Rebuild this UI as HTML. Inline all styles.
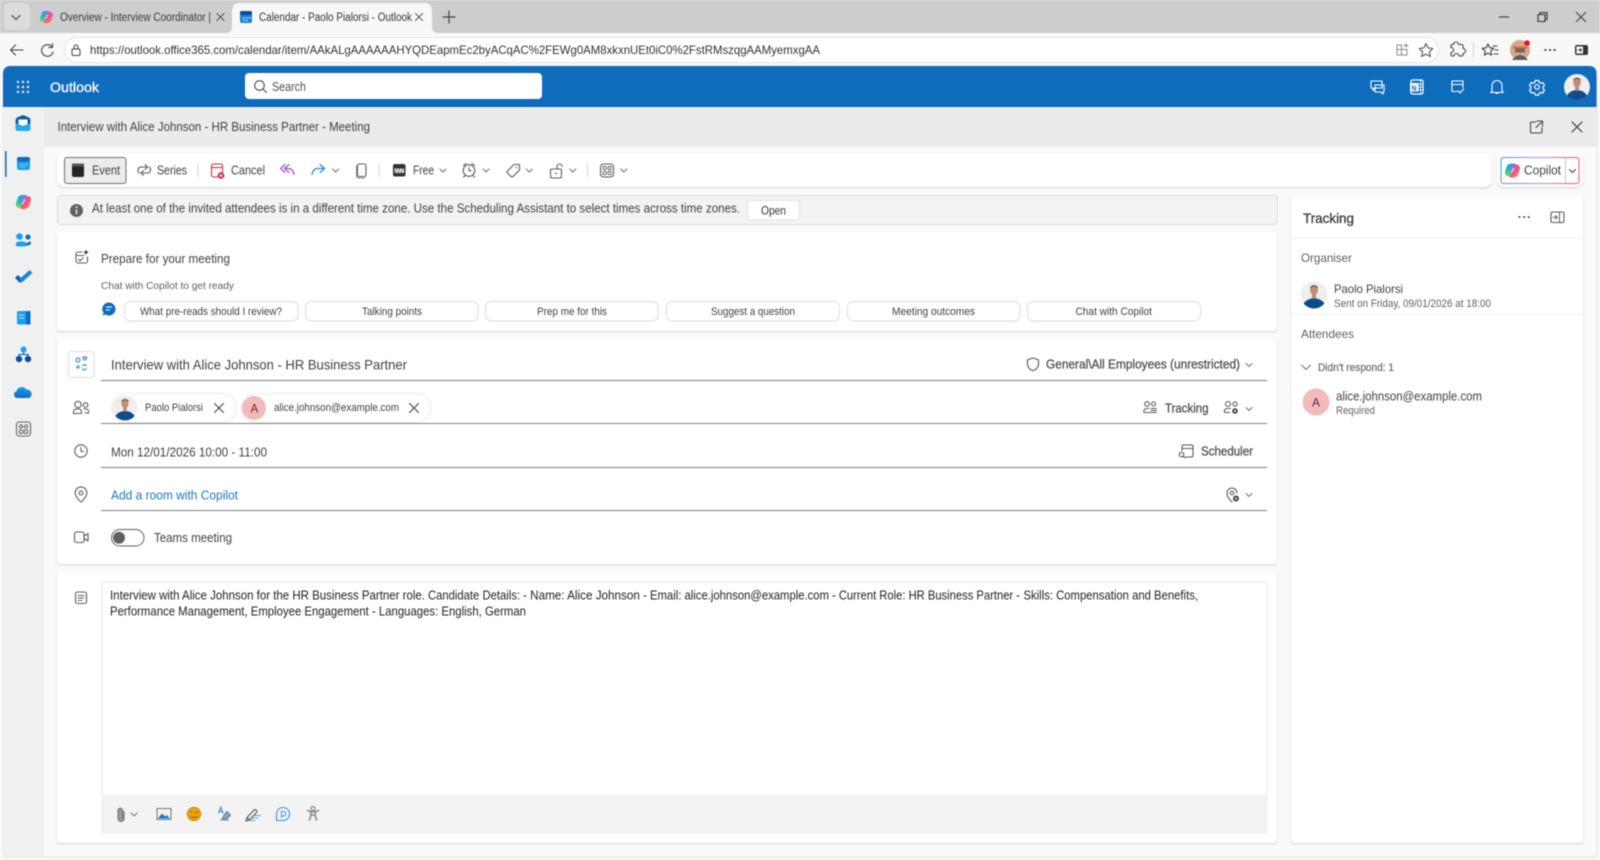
<!DOCTYPE html>
<html lang="en"><head><meta charset="utf-8"><title>Calendar - Paolo Pialorsi - Outlook</title>
<style>
html,body{margin:0;padding:0;width:1600px;height:860px;overflow:hidden;background:#f8f8f8}
svg{display:block;filter:blur(.4px)}
text{font-family:"Liberation Sans",sans-serif;font-size:12.5px;fill:#424242}
.sb{stroke:#505050;stroke-width:.28px;fill:#505050}
.card{filter:drop-shadow(0 1px 1px rgba(0,0,0,.16))}
.i{fill:none;stroke:#5c5c5c;stroke-width:1.1;stroke-linecap:round;stroke-linejoin:round}
.w{fill:none;stroke:#fff;stroke-width:1.2;stroke-linecap:round;stroke-linejoin:round}
.k{fill:none;stroke:#404040;stroke-width:1.1;stroke-linecap:round;stroke-linejoin:round}
</style></head><body>
<svg width="1600" height="860" viewBox="0 0 1600 860" xmlns="http://www.w3.org/2000/svg">
<defs>
<linearGradient id="g1" x1="0" y1="0" x2="0" y2="1"><stop offset="0" stop-color="#1f9cf0"/><stop offset=".55" stop-color="#22c3a8"/><stop offset="1" stop-color="#9ad548"/></linearGradient>
<linearGradient id="g2" x1="0" y1="0" x2="1" y2="1"><stop offset="0" stop-color="#a95cf0"/><stop offset=".55" stop-color="#f0558f"/><stop offset="1" stop-color="#f9a825"/></linearGradient>
<linearGradient id="gb" x1="0" y1="0" x2="1" y2="0"><stop offset="0" stop-color="#5aa9ea"/><stop offset=".5" stop-color="#c7a0e0"/><stop offset="1" stop-color="#f0707a"/></linearGradient>
<linearGradient id="bl" x1="0" y1="0" x2="0" y2="1"><stop offset="0" stop-color="#1a9df0"/><stop offset="1" stop-color="#0f6cbd"/></linearGradient>
<g id="cop"><path d="M-1-7Q-5-7-6-3.500L-7.500 1.500Q-8 6-3.500 6L0 6 3-7Z" fill="url(#g1)"/><path d="M1 7Q5 7 6 3.500L7.500-1.500Q8-6 3.500-6L0-6-3 7Z" fill="url(#g2)"/><path d="M1.300-2.500-1.300 2.500" stroke="#fff" stroke-width="1.300" opacity=".75"/></g>
<path id="chev" d="M-3-1.500 0 1.500 3-1.500" fill="none" stroke="#707070" stroke-width="1" stroke-linecap="round" stroke-linejoin="round"/>
<path id="x" d="M-4.500-4.500 4.500 4.500M4.500-4.500-4.500 4.500" fill="none" stroke="#424242" stroke-width="1.100" stroke-linecap="round"/>
<clipPath id="cc"><circle r="12.500"/></clipPath>
<g id="paolo"><circle r="12.500" fill="#f0eeea"/><g clip-path="url(#cc)"><ellipse cy="11.500" rx="10.500" ry="8.500" fill="#0f4c8c"/><rect x="-1.800" y="-.500" width="3.600" height="4" fill="#b98a70"/><ellipse cy="-4.500" rx="3.600" ry="4.800" fill="#c08e72"/><path d="M-3.500-6Q0-10 3.500-6L3.500-7.500Q0-10.500-3.500-7.500Z" fill="#5a4a40"/></g></g>
</defs>

<!-- Browser tab strip -->
<rect width="1600" height="33" fill="#cdcdcd"/>
<rect y="33" width="1600" height="827" fill="#f8f8f8"/>
<rect x="4" y="3" width="26" height="27" rx="6" fill="#dcdcdc"/>
<path d="M12 15.500 16 19.500 20 15.500" class="k"/>
<g transform="translate(46.500 17) scale(.85)"><use href="#cop"/></g>
<text x="60" y="21" textLength="151" lengthAdjust="spacingAndGlyphs" style="font-size:11.500px;fill:#3a3a3a">Overview - Interview Coordinator |</text>
<use href="#x" transform="translate(220.500 17) scale(.8)"/>
<path d="M226 33Q232 33 232 27V11Q232 3 240 3H424Q432 3 432 11V27Q432 33 438 33Z" fill="#f8f8f8"/>
<rect x="240" y="11" width="12" height="12" rx="2" fill="#1a86d9"/><rect x="240" y="11" width="12" height="4" rx="1.500" fill="#0f4c9c"/><path d="M243 18h1.500M246 18h1.500M249 18h1.500M243 20.500h1.500M246 20.500h1.500" stroke="#fff" stroke-width="1"/>
<text x="259" y="21" textLength="153" lengthAdjust="spacingAndGlyphs" style="font-size:11.500px;fill:#333">Calendar - Paolo Pialorsi - Outlook</text>
<use href="#x" transform="translate(419 17) scale(.8)"/>
<path d="M449 11v12M443 17h12" stroke="#444" stroke-width="1.200" stroke-linecap="round"/>
<path d="M1499 17h10" stroke="#333" stroke-width="1.100"/>
<path d="M1538 14.500h7v7h-7zM1540 14.500v-2h7v7h-2" fill="none" stroke="#333" stroke-width="1.100"/>
<use href="#x" transform="translate(1581 17)"/>

<!-- Address row -->
<path d="M23 50H11M15.500 45 10.500 50 15.500 55" class="k"/>
<path d="M52 47A5.800 5.800 0 1 0 53 52M52.500 43.500V47.500H48.500" class="k"/>
<rect x="64.500" y="37.500" width="1374" height="25" rx="12.500" fill="#fff" stroke="#e3e3e3"/>
<rect x="72" y="49" width="8" height="6.500" rx="1.500" class="k" style="stroke-width:1"/><path d="M74 49V47A2 2 0 0 1 78 47V49" class="k" style="stroke-width:1"/>
<text x="90" y="54" textLength="730" lengthAdjust="spacingAndGlyphs" style="font-size:12px;fill:#333">https://outlook.office365.com/calendar/item/AAkALgAAAAAAHYQDEapmEc2byACqAC%2FEWg0AM8xkxnUEt0iC0%2FstRMszqgAAMyemxgAA</text>
<path d="M1397 45h4.500v4.500h-4.500zM1397 49.500h4.500V55h-4.500zM1401.500 49.500H1407V55h-5.500z" fill="none" stroke="#8a8a8a" stroke-width="1"/><path d="M1406 43v5M1403.500 45.500h5" stroke="#8a8a8a" stroke-width="1"/>
<path d="M1426 43.500l2.100 4.400 4.800.6-3.500 3.300.9 4.700-4.300-2.400-4.300 2.400.9-4.700-3.500-3.300 4.800-.6z" class="i" style="stroke:#555"/>
<path d="M1453.500 44.500a2.500 2.500 0 0 1 5 0h3.500a1.500 1.500 0 0 1 1 1v3a2.500 2.500 0 0 1 0 5v1.500a1.500 1.500 0 0 1-1 1h-3a2.500 2.500 0 0 0-5 0h-2a1.500 1.500 0 0 1-1-1v-2.500a2.500 2.500 0 0 0 0-5v-2a1.500 1.500 0 0 1 1-1z" class="k"/>
<rect x="1473" y="43" width="1" height="14" fill="#d0d0d0"/>
<path d="M1488 44l1.800 3.800 4 .5-3 2.800.8 4-3.600-2-3.600 2 .8-4-3-2.800 4-.5zM1493 46h4M1495 50h3M1494 54h4" class="k"/>
<circle cx="1520" cy="50" r="10" fill="#d9a58e"/><path d="M1513 46.500h14v2h-14z" fill="#d96a3a"/><rect x="1515" y="48.500" width="10" height="4" fill="#6a6a6a"/><path d="M1512 60Q1520 50 1528 60Z" fill="#5c5c5c"/><circle cx="1527" cy="43" r="2.800" fill="#e81123"/>
<path d="M1545 50h.8M1549.600 50h.8M1554.200 50h.8" stroke="#333" stroke-width="1.700" stroke-linecap="round"/>
<rect x="1575" y="45" width="13" height="10" rx="2" fill="#333"/><rect x="1576.500" y="46.500" width="6.500" height="7" fill="#fff"/><path d="M1577.500 50h4M1580 48l1.500 2-1.500 2" stroke="#333" stroke-width=".9" fill="none"/>

<!-- App shell -->
<path d="M3 74Q3 66 11 66H1589Q1597 66 1597 74V851Q1597 857 1591 857H9Q3 857 3 851Z" fill="#fafafa" stroke="#e5e5e5" stroke-width="1"/>
<path d="M3 107V74Q3 66 11 66H1589Q1596.500 66 1596.500 74V107Z" fill="#0f6cbd"/>
<path d="M3 107H44V857H9Q3 857 3 851Z" fill="#f0f0f0"/>
<rect x="44" y="107" width="1552.500" height="40" fill="#ebebeb"/>
<!-- Header -->
<g fill="#e8f2fb"><circle cx="18" cy="82" r="1.200"/><circle cx="23" cy="82" r="1.200"/><circle cx="28" cy="82" r="1.200"/><circle cx="18" cy="87" r="1.200"/><circle cx="23" cy="87" r="1.200"/><circle cx="28" cy="87" r="1.200"/><circle cx="18" cy="92" r="1.200"/><circle cx="23" cy="92" r="1.200"/><circle cx="28" cy="92" r="1.200"/></g>
<text x="50" y="92" textLength="49" lengthAdjust="spacingAndGlyphs" style="font-size:14px;fill:#fff;stroke:#fff;stroke-width:.3px">Outlook</text>
<rect x="245" y="73" width="297" height="26" rx="4" fill="#fff"/>
<circle cx="259.500" cy="85.500" r="4.800" fill="none" stroke="#4a4a4a" stroke-width="1.100"/><path d="M263 89l3.500 3.500" stroke="#4a4a4a" stroke-width="1.100" stroke-linecap="round"/>
<text x="272" y="91" textLength="34" lengthAdjust="spacingAndGlyphs" style="font-size:12.500px;fill:#505050">Search</text>
<path d="M1371 81h11v7h-7l-2 2.500V88h-2zM1375 85h9v7h-1v2l-2.500-2H1375z" class="w" style="stroke-width:1.100"/>
<rect x="1411" y="80" width="12" height="14" rx="1.500" class="w"/><path d="M1418 84h5M1418 87h5M1418 90h5M1420.500 80v14" class="w" style="stroke-width:.8"/><rect x="1410" y="83" width="8.500" height="8.500" rx="1" fill="#fff"/><text x="1411.500" y="90.500" style="font-size:7px;fill:#0f6cbd;stroke:#0f6cbd;stroke-width:.3px">N</text>
<path d="M1452 81h11v6.500M1452 81v10.500h5M1452 84.500h11M1458 91l2 2 3.500-4" class="w" style="stroke-width:1.100"/>
<path d="M1492 91V85.500a5 5 0 0 1 10 0V91l1.200 1.500h-12.400zM1495.500 92.500a1.700 1.700 0 0 0 3 0" class="w" style="stroke-width:1.100"/>
<circle cx="1537" cy="87" r="2.300" class="w"/><path d="M1535.300 80.500h3.400l.5 1.800 1.700.9 1.900-.6 1.700 2.900-1.400 1.300v2l1.400 1.300-1.700 2.900-1.900-.6-1.700.9-.5 1.800h-3.400l-.5-1.800-1.700-.9-1.900.6-1.700-2.900 1.400-1.300v-2l-1.400-1.300 1.700-2.900 1.900.6 1.700-.9z" class="w"/>
<g transform="translate(1577 87) scale(1.040)"><use href="#paolo"/></g>

<!-- Left rail -->
<rect x="5" y="151" width="1.600" height="26" rx=".8" fill="#0f6cbd"/>
<path d="M15.500 120.500Q15.500 118.500 17 117.500L23 115 29 117.500Q30.500 118.500 30.500 120.500V128Q30.500 131 27.500 131H18.500Q15.500 131 15.500 128Z" fill="#0f5ea8"/><path d="M18.500 119.500h9v5l-4.500 1.500-4.500-1.500z" fill="#fff"/><path d="M15.500 123l7.500 3 7.500-3v5Q30.500 131 27.500 131H18.500Q15.500 131 15.500 128Z" fill="#28a8ea"/>
<rect x="17" y="157" width="13" height="13" rx="2.200" fill="#1aa0f2"/><rect x="17" y="157" width="13" height="4.500" rx="2" fill="#0f6cbd"/><path d="M20 164.500h1.500M23 164.500h1.500M26 164.500h1.500M20 167h1.500M23 167h1.500" stroke="#cfe8fb" stroke-width="1"/>
<g transform="translate(23.500 202)"><use href="#cop"/></g>
<circle cx="19.500" cy="236.500" r="3.300" fill="#1aa0f2"/><circle cx="28" cy="237" r="2.600" fill="#0f6cbd"/><path d="M16 246Q15 241.500 19.500 241.500H23Q27 241.500 26.500 246Q21 247 16 246Z" fill="#1aa0f2"/><path d="M25 245.500Q27 241.500 31 241.500Q31.500 245.500 27 245.500Z" fill="#0f6cbd"/>
<path d="M16.500 276.500l5 5" fill="none" stroke="#0f5ea8" stroke-width="4.200"/><path d="M20.500 281l10.500-9.500" fill="none" stroke="#1a86d9" stroke-width="4.200"/>
<rect x="17" y="311" width="13" height="13.500" rx="1.500" fill="#1aa0f2"/><rect x="26" y="311" width="4.500" height="13.500" fill="#0f6cbd"/><path d="M19 315h5M19 318h5" stroke="#cfe8fb" stroke-width="1.100"/>
<circle cx="23.500" cy="349.500" r="3" fill="#1aa0f2"/><circle cx="19" cy="359" r="3.200" fill="#0f4c9c"/><circle cx="28" cy="359" r="3.200" fill="#0f4c9c"/><path d="M23.500 352v3M19 356v-1.500h9V356" stroke="#0f6cbd" stroke-width="1.200" fill="none"/>
<path d="M17 398a3.500 3.500 0 0 1-.5-6.800 5.500 5.500 0 0 1 10-1.500 4.300 4.300 0 0 1 4 7Q30 398 28 398Z" fill="url(#bl)"/>
<rect x="16.500" y="422" width="14" height="14" rx="2.500" class="i" style="stroke:#666"/><circle cx="21" cy="426.500" r="1.600" class="i" style="stroke:#666"/><circle cx="26" cy="426.500" r="1.600" class="i" style="stroke:#666"/><rect x="19.300" y="430" width="3.400" height="3.400" rx=".8" class="i" style="stroke:#666"/><rect x="24.300" y="430" width="3.400" height="3.400" rx=".8" class="i" style="stroke:#666"/>

<!-- Title row -->
<text x="57.500" y="131" textLength="312.500" lengthAdjust="spacingAndGlyphs">Interview with Alice Johnson - HR Business Partner - Meeting</text>
<path d="M1536 122h-4a1.500 1.500 0 0 0-1.500 1.500v8a1.500 1.500 0 0 0 1.500 1.500h8.500a1.500 1.500 0 0 0 1.500-1.500V128M1537 121h5.500v5.500M1542 121.500l-6 6" class="k" style="stroke:#444"/>
<use href="#x" transform="translate(1577 127) scale(1.100)"/>

<!-- Command bar -->
<rect class="card" x="57" y="153" width="1435" height="34" rx="7" fill="#fff"/>
<rect x="64.500" y="157.500" width="61.500" height="26" rx="2.500" fill="#ececec" stroke="#6e6e6e"/>
<rect x="72" y="163.500" width="12" height="13.500" rx="2" fill="#242424"/><rect x="72" y="163.500" width="12" height="3" fill="#555"/>
<text x="92" y="174.500" textLength="28" lengthAdjust="spacingAndGlyphs">Event</text>
<path d="M139 173q-2.500-3.500 1-6h7.500M145 164.500l2.700 2.500-2.700 2.500M149.500 167q2.500 3.500-1 6H141M143.500 175.500l-2.700-2.500 2.700-2.500" class="i"/>
<text x="157" y="174.500" textLength="30" lengthAdjust="spacingAndGlyphs">Series</text>
<rect x="197.500" y="164" width="1" height="13" fill="#d6d6d6"/>
<rect x="211.500" y="164" width="11" height="13" rx="2" fill="none" stroke="#c4314b" stroke-width="1.100"/><path d="M211.500 167.500h11" stroke="#c4314b" stroke-width="1.100"/><circle cx="221" cy="175.500" r="3.400" fill="#c4314b"/><path d="M219.500 174l3 3M222.500 174l-3 3" stroke="#fff" stroke-width=".8"/>
<text x="231" y="174.500" textLength="34" lengthAdjust="spacingAndGlyphs">Cancel</text>
<path d="M285 164.500l-4.500 4 4.500 4M289 164.500l-4.500 4 4.500 4M285 168.500h3q5 0 6 6" fill="none" stroke="#9b54c4" stroke-width="1.200" stroke-linecap="round" stroke-linejoin="round"/>
<path d="M320 164.500l4.500 4-4.500 4M324 168.500h-6q-5 0-6 6" fill="none" stroke="#2b88d8" stroke-width="1.200" stroke-linecap="round" stroke-linejoin="round"/>
<use href="#chev" x="335.500" y="170.500"/>
<rect x="357.500" y="164" width="8.500" height="12.500" rx="1.800" class="i"/><path d="M356.500 166v9.500q0 2.500 2.500 2.500h5.500" class="i" style="stroke:#888"/>
<rect x="378.800" y="164" width="1" height="13" fill="#d6d6d6"/>
<rect x="393" y="164" width="12.500" height="12.500" rx="2" fill="#333"/><path d="M394.500 168.500h9.500v4.500h-9.500z" fill="#eee"/><path d="M395 173l2-4.500M398 173l2-4.500M401 173l2-4.500" stroke="#555" stroke-width=".8"/>
<text x="413" y="174.500" textLength="21" lengthAdjust="spacingAndGlyphs">Free</text>
<use href="#chev" x="442.800" y="170.500"/>
<circle cx="469" cy="170.500" r="5.800" class="i"/><path d="M469 167.500v3.200h2.300M463.500 165.500l2.500-2M474.500 165.500l-2.500-2M465 175.500l-1.500 1.800M473 175.500l1.500 1.800" class="i"/>
<use href="#chev" x="486" y="170.500"/>
<path d="M507.500 171l6.500-6.500h5.500V170l-6.500 6.500q-1 1-2 0l-3.500-3.500q-1-1 0-2z" class="i"/><circle cx="516.500" cy="167.500" r=".8" fill="#5c5c5c"/>
<use href="#chev" x="529.300" y="170.500"/>
<rect x="550.500" y="169" width="11" height="9" rx="1.500" class="i"/><path d="M557 169v-2.500a2.500 2.500 0 0 1 5 0" class="i"/><circle cx="556" cy="173.500" r=".9" fill="#5c5c5c"/>
<use href="#chev" x="572.800" y="170.500"/>
<rect x="587" y="164" width="1" height="13" fill="#d6d6d6"/>
<rect x="600.500" y="164" width="13" height="13" rx="3" class="i"/><rect x="603" y="166.500" width="3.200" height="3" rx=".6" class="i" style="stroke-width:.9"/><rect x="608" y="166.500" width="3.200" height="3" rx=".6" class="i" style="stroke-width:.9"/><rect x="603" y="171.500" width="3.200" height="3" rx=".6" class="i" style="stroke-width:.9"/><rect x="608" y="171.500" width="3.200" height="3" rx=".6" class="i" style="stroke-width:.9"/>
<use href="#chev" x="623.800" y="170.500"/>

<!-- Copilot button -->
<rect class="card" x="1497" y="153" width="86" height="34" rx="7" fill="#fff"/>
<rect x="1501" y="157.500" width="78" height="26" rx="2.500" fill="#fff" stroke="url(#gb)" stroke-width="1.200"/>
<use href="#cop" transform="translate(1512.500 170.500)"/>
<text x="1524" y="174.500" textLength="37" lengthAdjust="spacingAndGlyphs">Copilot</text>
<rect x="1565" y="158" width="1" height="25" fill="#c9c9c9"/>
<path d="M1569.500 169.500l3 3 3-3" class="k"/>

<!-- Info bar -->
<rect x="57.500" y="195.500" width="1220" height="29" rx="2.500" fill="#f3f3f3" stroke="#dcdcdc"/>
<circle cx="76.500" cy="210.500" r="6.500" fill="#616161"/><path d="M76.500 209.500v4.500" stroke="#fff" stroke-width="1.300"/><circle cx="76.500" cy="207.300" r=".9" fill="#fff"/>
<text x="92" y="212.500" textLength="648" lengthAdjust="spacingAndGlyphs">At least one of the invited attendees is in a different time zone. Use the Scheduling Assistant to select times across time zones.</text>
<rect x="747.500" y="200.500" width="52" height="19.500" rx="2.500" fill="#fff" stroke="#e2e2e2"/>
<text x="761" y="214.500" textLength="25" lengthAdjust="spacingAndGlyphs" style="font-size:11.500px;fill:#333">Open</text>

<!-- Prepare card -->
<rect class="card" x="57" y="232" width="1220" height="99" rx="3" fill="#fff"/>
<path d="M82 252h-4a2 2 0 0 0-2 2v7a2 2 0 0 0 2 2h7.500a2 2 0 0 0 2-2v-4M76 255.500h8M78.500 259.500l1.500 1.500 3-3" class="i"/><path d="M86 249.500l.8 2 2 .8-2 .8-.8 2-.8-2-2-.8 2-.8z" fill="#333"/>
<text x="101" y="263" textLength="129" lengthAdjust="spacingAndGlyphs">Prepare for your meeting</text>
<text x="101" y="289" textLength="133" lengthAdjust="spacingAndGlyphs" style="font-size:10.500px;fill:#616161">Chat with Copilot to get ready</text>
<path d="M109 302.500a6.500 6.500 0 1 1-3.500 12l-3 1 1-2.800A6.500 6.500 0 0 1 109 302.500z" fill="#0f6cbd"/><path d="M106 307h6M106 310h4" stroke="#fff" stroke-width="1.100"/>
<g fill="#fff" stroke="#dcdcdc">
<rect x="124.500" y="301.500" width="173.500" height="19.500" rx="6"/><rect x="305.500" y="301.500" width="172.500" height="19.500" rx="6"/><rect x="485.500" y="301.500" width="172.500" height="19.500" rx="6"/><rect x="666.500" y="301.500" width="173" height="19.500" rx="6"/><rect x="847.500" y="301.500" width="172.500" height="19.500" rx="6"/><rect x="1027.500" y="301.500" width="173" height="19.500" rx="6"/>
</g>
<text x="140" y="315" textLength="142" lengthAdjust="spacingAndGlyphs" style="font-size:11px">What pre-reads should I review?</text>
<text x="362" y="315" textLength="60" lengthAdjust="spacingAndGlyphs" style="font-size:11px">Talking points</text>
<text x="537" y="315" textLength="70" lengthAdjust="spacingAndGlyphs" style="font-size:11px">Prep me for this</text>
<text x="711" y="315" textLength="84" lengthAdjust="spacingAndGlyphs" style="font-size:11px">Suggest a question</text>
<text x="892" y="315" textLength="83" lengthAdjust="spacingAndGlyphs" style="font-size:11px">Meeting outcomes</text>
<text x="1075.500" y="315" textLength="76.500" lengthAdjust="spacingAndGlyphs" style="font-size:11px">Chat with Copilot</text>

<!-- Form card -->
<rect class="card" x="57" y="338" width="1220" height="226" rx="3" fill="#fff"/>
<rect x="68.500" y="351.500" width="25.500" height="26" rx="3" fill="#fff" stroke="#dedede"/>
<circle cx="78" cy="360" r="2" fill="none" stroke="#4a90d0" stroke-width="1.300"/><path d="M83 358.500l1.800 1.800 1.800-1.800a1 1 0 0 0-1.800-1 1 1 0 0 0-1.800 1z" fill="none" stroke="#4a90d0" stroke-width="1.200"/><path d="M78 365v4M76 367h4M82.500 366a2.200 2.200 0 0 1 4 0M86.500 368.500a2.200 2.200 0 0 1-4 0" fill="none" stroke="#4a90d0" stroke-width="1.300"/>
<text x="111" y="369.500" textLength="296" lengthAdjust="spacingAndGlyphs" style="font-size:14px">Interview with Alice Johnson - HR Business Partner</text>
<path d="M1033 358l5.500 1.800v4.700q0 4-5.500 6.200-5.500-2.200-5.500-6.200v-4.700z" class="i"/>
<text class="sb" x="1046" y="368.500" textLength="194" lengthAdjust="spacingAndGlyphs">General\All Employees (unrestricted)</text>
<use href="#chev" x="1249" y="365"/>
<rect x="101" y="380" width="1166" height="1" fill="#7f7f7f"/>

<circle cx="78" cy="404.500" r="3.200" class="i"/><path d="M73.500 413.500q-.5-4.500 3-4.500h2q3.500 0 3 4.500z" class="i"/><circle cx="85.500" cy="405" r="2.300" class="i"/><path d="M84 409h2q3 0 2.500 4h-3.500" class="i"/>
<rect x="111.500" y="393.500" width="125" height="29" rx="14.500" fill="#fff" stroke="#ececec"/>
<use href="#paolo" transform="translate(125 408)"/>
<text x="145" y="411" textLength="58" lengthAdjust="spacingAndGlyphs" style="font-size:11px">Paolo Pialorsi</text>
<use href="#x" transform="translate(219 408)"/>
<rect x="241" y="393.500" width="190" height="29" rx="14.500" fill="#fff" stroke="#ececec"/>
<circle cx="254" cy="408" r="12" fill="#f1bbbc"/><text x="250.500" y="412.500" style="font-size:11.500px;fill:#751d1f">A</text>
<text x="274" y="411" textLength="125" lengthAdjust="spacingAndGlyphs" style="font-size:11px">alice.johnson@example.com</text>
<use href="#x" transform="translate(414 408)"/>
<circle cx="1147" cy="404" r="2.300" class="i"/><circle cx="1153.500" cy="404" r="2" class="i"/><path d="M1150.500 412.500h-6.500v-1.500q0-2.500 3-2.500h2" class="i"/><path d="M1151 408.500h5.500M1151 410.500h5.500M1151 412.500h5.500" class="i" style="stroke-width:.9"/>
<text class="sb" x="1165" y="412.500" textLength="43.500" lengthAdjust="spacingAndGlyphs">Tracking</text>
<circle cx="1228" cy="404" r="2.500" class="i"/><circle cx="1235" cy="404" r="2.100" class="i"/><path d="M1224.500 412.500v-1.500q0-2.500 3-2.500h3M1224.500 412.500h5" class="i"/><circle cx="1235" cy="411" r="2.800" fill="#444"/><circle cx="1235" cy="411" r="1" fill="#fff"/>
<use href="#chev" x="1249" y="409"/>
<rect x="101" y="423" width="1166" height="1" fill="#7f7f7f"/>

<circle cx="81" cy="451" r="6.200" class="i"/><path d="M81 447.500v4h2.800" class="i"/>
<text x="111" y="456.500" textLength="156" lengthAdjust="spacingAndGlyphs">Mon 12/01/2026 10:00 - 11:00</text>
<path d="M1182 450.500v-4a1.500 1.500 0 0 1 1.500-1.500h8a1.500 1.500 0 0 1 1.500 1.500v9a1.500 1.500 0 0 1-1.500 1.500h-6M1182 448.500h11" class="i"/><circle cx="1181.500" cy="454.500" r="2.300" class="i"/><path d="M1183.200 456.300l1.500 1.500" class="i"/>
<text class="sb" x="1201" y="455.500" textLength="52" lengthAdjust="spacingAndGlyphs">Scheduler</text>
<rect x="101" y="467" width="1166" height="1" fill="#7f7f7f"/>

<path d="M81 502q-5.800-5-5.800-9.300a5.800 5.800 0 0 1 11.600 0Q86.800 497 81 502z" class="i"/><circle cx="81" cy="493" r="1.900" class="i"/>
<text x="111" y="499.500" textLength="127" lengthAdjust="spacingAndGlyphs" style="fill:#1f77c4">Add a room with Copilot</text>
<path d="M1232 502q-5-4.500-5-9a5 5 0 0 1 10 0" class="i"/><circle cx="1232" cy="493" r="1.800" class="i"/><circle cx="1236" cy="498.500" r="3" fill="#444"/><circle cx="1236" cy="498.500" r="1" fill="#fff"/>
<use href="#chev" x="1249" y="495"/>
<rect x="101" y="510" width="1166" height="1" fill="#7f7f7f"/>

<rect x="74.500" y="532" width="9.500" height="10.500" rx="2" class="i"/><path d="M84 536l4-2.500v7.500l-4-2.500" class="i"/>
<rect x="111.500" y="529.500" width="32.500" height="16.500" rx="8.250" fill="#fff" stroke="#616161"/>
<circle cx="119" cy="537.700" r="6" fill="#616161"/>
<text x="154" y="542" textLength="78" lengthAdjust="spacingAndGlyphs">Teams meeting</text>

<!-- Body card -->
<rect class="card" x="57" y="571" width="1220" height="272" rx="3" fill="#fff"/>
<rect x="75.500" y="592" width="11" height="11.500" rx="2" class="i"/><path d="M78 595.500h6M78 598h6M78 600.500h4" class="i" style="stroke-width:.9"/>
<rect x="102" y="582" width="1165" height="251" rx="2" fill="#fff" stroke="#ececec"/>
<g style="fill:#242424">
<text style="fill:#242424" x="110" y="599.500" textLength="315" lengthAdjust="spacingAndGlyphs">Interview with Alice Johnson for the HR Business Partner role.</text>
<text style="fill:#242424" x="428" y="599.500" textLength="92" lengthAdjust="spacingAndGlyphs">Candidate Details:</text>
<text style="fill:#242424" x="523" y="599.500" textLength="124" lengthAdjust="spacingAndGlyphs">- Name: Alice Johnson -</text>
<text style="fill:#242424" x="650" y="599.500" textLength="179" lengthAdjust="spacingAndGlyphs">Email: alice.johnson@example.com</text>
<text style="fill:#242424" x="832" y="599.500" textLength="188" lengthAdjust="spacingAndGlyphs">- Current Role: HR Business Partner -</text>
<text style="fill:#242424" x="1023.500" y="599.500" textLength="174.500" lengthAdjust="spacingAndGlyphs">Skills: Compensation and Benefits,</text>
<text style="fill:#242424" x="110" y="615.500" textLength="416" lengthAdjust="spacingAndGlyphs">Performance Management, Employee Engagement - Languages: English, German</text>
</g>
<path d="M102 794h1165v36q0 2.500-2 2.500H104q-2 0-2-2.500z" fill="#f3f3f3"/>
<path d="M124 811v7.500a3 3 0 0 1-6 0V810.500a2.300 2.300 0 0 1 4.600 0v8" fill="#9a9a9a" stroke="#777" stroke-width="1.200"/>
<use href="#chev" x="134" y="814.500"/>
<rect x="157" y="808.500" width="14" height="11" fill="#f0f0f0" stroke="#777" stroke-width="1"/><path d="M158 818.500l4-5 3 3 1.500-1.500 3.500 3.500z" fill="#0f78d4"/>
<circle cx="194" cy="814" r="6.800" fill="#eaa300" stroke="#b88400" stroke-width=".7"/><circle cx="191.500" cy="812" r=".8" fill="#664d00"/><circle cx="196.500" cy="812" r=".8" fill="#664d00"/><path d="M190.500 816q3.500 3 7 0" stroke="#664d00" stroke-width=".8" fill="none"/>
<path d="M218.500 813.500l2.300-6.500 2.300 6.500M219.500 811.500h2.500" fill="none" stroke="#1f88d9" stroke-width="1"/><path d="M224 815l3-3.500 3.500 3.500-3.500 4h-5z" fill="#8aa8bf" stroke="#666" stroke-width=".8"/><path d="M220 820h9" stroke="#5a9bd6" stroke-width="1"/>
<path d="M246 821l1-3.500 7-7.500a1.800 1.800 0 0 1 2.500 2.500l-7 7.500zM247 817.500l2.500 2.500" fill="none" stroke="#555" stroke-width="1.100"/><path d="M254 815.500h7M252 818h6M250 820.500h5" stroke="#5aa9ea" stroke-width=".9"/>
<path d="M283 807.500a6.500 6.500 0 0 1 0 13h-6.500v-6.500a6.500 6.500 0 0 1 6.500-6.500z" fill="none" stroke="#3b94e0" stroke-width="1.100" stroke-linejoin="round"/><path d="M281.500 818v-6.500h2a2 2 0 0 1 0 4.500h-2" fill="none" stroke="#3b94e0" stroke-width="1"/>
<circle cx="313" cy="808.500" r="2" fill="none" stroke="#8a8a8a" stroke-width="1.300"/><path d="M307.500 810.500l3 1.200h5l3-1.200M310.500 811.700l.5 3.300-1.500 5M315.500 811.700l-.5 3.300 1.500 5M311 815h4" fill="none" stroke="#8a8a8a" stroke-width="1.600" stroke-linecap="round"/>

<!-- Tracking panel -->
<rect class="card" x="1291" y="195" width="292" height="648" rx="3" fill="#fff"/>
<text x="1303" y="223" textLength="51" lengthAdjust="spacingAndGlyphs" style="font-size:14px;fill:#424242;stroke:#424242;stroke-width:.35px">Tracking</text>
<path d="M1519 217h.8M1523.700 217h.8M1528.400 217h.8" stroke="#333" stroke-width="1.500" stroke-linecap="round"/>
<rect x="1551" y="212" width="13" height="10.500" rx="1.500" class="i"/><path d="M1559.500 212v10.500M1553 217.300h4M1555.500 215.500l1.800 1.800-1.800 1.800" class="i" style="stroke-width:1"/>
<rect x="1291" y="238" width="292" height="1" fill="#efefef"/>
<text x="1301" y="262" textLength="51" lengthAdjust="spacingAndGlyphs" style="font-size:12px;fill:#616161">Organiser</text>
<g transform="translate(1314 295) scale(1.080)"><use href="#paolo"/></g>
<text x="1334" y="293" textLength="69" lengthAdjust="spacingAndGlyphs" style="font-size:12px">Paolo Pialorsi</text>
<text x="1334" y="307" textLength="157" lengthAdjust="spacingAndGlyphs" style="font-size:11px;fill:#616161">Sent on Friday, 09/01/2026 at 18:00</text>
<rect x="1291" y="314" width="292" height="1" fill="#efefef"/>
<text x="1301" y="338" textLength="53" lengthAdjust="spacingAndGlyphs" style="font-size:12px;fill:#616161">Attendees</text>
<path d="M1301.500 365l4.500 4.500 4.500-4.500" fill="none" stroke="#707070" stroke-width="1" stroke-linecap="round"/>
<text x="1318" y="371" textLength="76" lengthAdjust="spacingAndGlyphs" style="font-size:11px;fill:#707070;stroke:#707070;stroke-width:.25px">Didn't respond: 1</text>
<circle cx="1316" cy="402" r="13.500" fill="#f1bbbc"/><text x="1312" y="406.500" style="font-size:12px;fill:#751d1f">A</text>
<text x="1336" y="400.500" textLength="146" lengthAdjust="spacingAndGlyphs">alice.johnson@example.com</text>
<text x="1336" y="414" textLength="39" lengthAdjust="spacingAndGlyphs" style="font-size:11px;fill:#616161">Required</text>
</svg>
</body></html>
